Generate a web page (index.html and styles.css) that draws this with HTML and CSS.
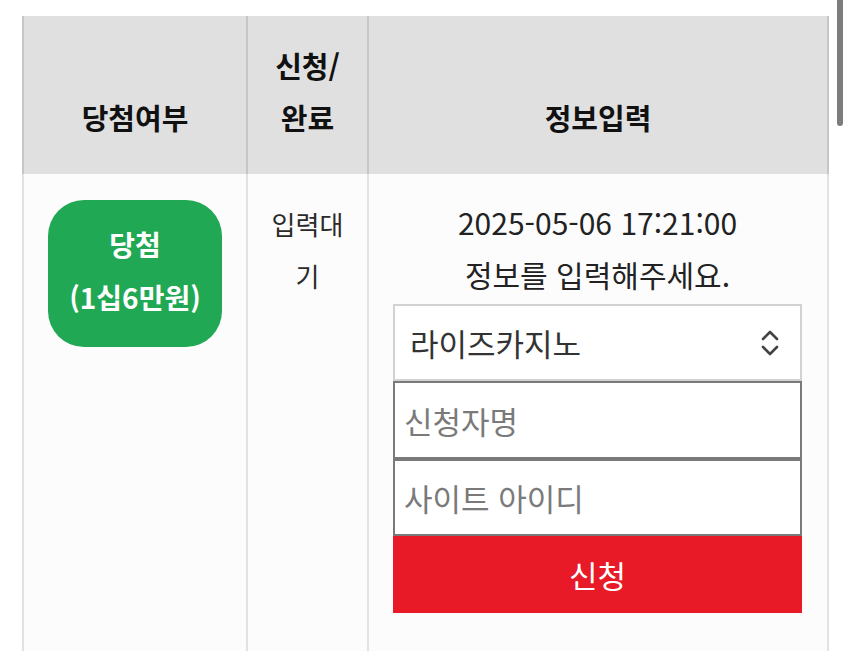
FILE: index.html
```html
<!DOCTYPE html>
<html lang="ko">
<head>
    <meta charset="UTF-8">
    <meta name="viewport" content="width=device-width, initial-scale=1.0">
    <title>당첨 정보입력</title>
    <link rel="stylesheet" href="styles.css">
</head>
<body>
    <div class="scrollbar"></div>

    <table class="prize-table">
        <thead>
            <tr>
                <th class="col-result">당첨여부</th>
                <th class="col-status">신청/<br>완료</th>
                <th class="col-info">정보입력</th>
            </tr>
        </thead>
        <tbody>
            <tr>
                <td class="col-result">
                    <div class="badge">당첨<br>(1십6만원)</div>
                </td>
                <td class="col-status">입력대기</td>
                <td class="col-info">
                    <div class="info-date">2025-05-06 17:21:00</div>
                    <div class="info-msg">정보를 입력해주세요.</div>

                    <form class="apply-form">
                        <div class="select-wrap">
                            <select class="site-select">
                                <option>라이즈카지노</option>
                            </select>
                            <svg class="select-icon" width="18" height="28" viewBox="0 0 18 28">
                                <polyline points="2,10 9,3 16,10" fill="none" stroke="#444" stroke-width="2.6" stroke-linecap="round" stroke-linejoin="round"/>
                                <polyline points="2,18 9,25 16,18" fill="none" stroke="#444" stroke-width="2.6" stroke-linecap="round" stroke-linejoin="round"/>
                            </svg>
                        </div>
                        <input type="text" class="field" placeholder="신청자명">
                        <input type="text" class="field" placeholder="사이트 아이디">
                        <button type="button" class="btn-apply">신청</button>
                    </form>
                </td>
            </tr>
        </tbody>
    </table>
</body>
</html>
```

FILE: styles.css
```css
* {
    margin: 0;
    padding: 0;
    box-sizing: border-box;
}

body {
    font-family: 'Noto Sans CJK KR', 'Noto Sans', sans-serif;
    background: #fff;
    color: #222;
    padding: 16px 0 0 22px;
    height: 652px;
    overflow: hidden;
    position: relative;
}

/* fake mobile scrollbar */
.scrollbar {
    position: absolute;
    top: 0;
    right: 7px;
    width: 6px;
    height: 126px;
    background: #7d7d7d;
    border-radius: 0 0 3px 3px;
}

.prize-table {
    border-collapse: separate;
    border-spacing: 0;
    width: 807px;
    table-layout: fixed;
}

.prize-table th.col-result,
.prize-table td.col-result { width: 224px; }
.prize-table th.col-status,
.prize-table td.col-status { width: 121px; }

.prize-table th {
    background: #e0e0e0;
    color: #111;
    font-size: 29px;
    font-weight: 700;
    line-height: 52px;
    padding: 23px 6px 31px;
    text-align: center;
    vertical-align: bottom;
    border-left: 2px solid #c6c6c6;
}

.prize-table th:last-child {
    border-right: 2px solid #c6c6c6;
}

.prize-table td {
    background: #fcfcfd;
    text-align: center;
    vertical-align: top;
    line-height: 52px;
    border-left: 2px solid #e2e2e4;
    padding: 22px 25px 38px 24px;
}

.prize-table td:last-child {
    border-right: 2px solid #e2e2e4;
}

td.col-result {
    padding: 26px 24px 0;
}

.prize-table td.col-status {
    font-size: 26px;
    padding: 24px 16px 0;
    color: #2a2a2a;
}

.badge {
    display: inline-block;
    background: #21a854;
    color: #fff;
    font-size: 28px;
    font-weight: 700;
    line-height: 53px;
    padding: 18px 0 23px;
    border-radius: 36px;
    width: 174px;
}

.info-date,
.info-msg {
    font-size: 30px;
    line-height: 52px;
    color: #222;
}

.apply-form {
    display: flex;
    flex-direction: column;
    margin-top: 4px;
}

.select-wrap {
    position: relative;
}

.site-select {
    -webkit-appearance: none;
    appearance: none;
    width: 100%;
    height: 77px;
    border: 2px solid #d2d2d2;
    background: #fff;
    font-family: inherit;
    font-size: 31px;
    color: #333;
    padding: 0 50px 0 15px;
    outline: none;
}

.select-icon {
    position: absolute;
    right: 23px;
    top: 25px;
    pointer-events: none;
}

.field {
    width: 100%;
    height: 78px;
    border: 2px solid #7a7a7a;
    background: #fff;
    font-family: inherit;
    font-size: 31px;
    padding: 0 9px;
    color: #333;
    outline: none;
}

.field + .field {
    height: 77px;
}

.field::placeholder {
    color: #7a7a7a;
}

.btn-apply {
    width: 100%;
    height: 77px;
    border: none;
    background: #e81a27;
    color: #fff;
    font-family: inherit;
    font-size: 31px;
    cursor: pointer;
}
```
